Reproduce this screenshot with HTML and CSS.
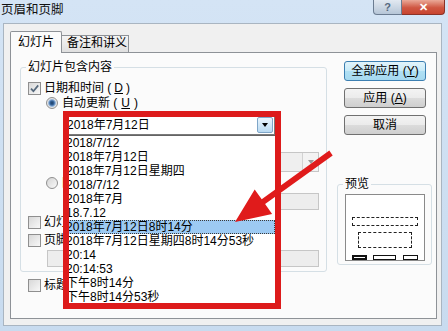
FILE: index.html
```html
<!DOCTYPE html>
<html>
<head>
    <meta charset="utf-8">
    <title>页眉和页脚</title>
    <link rel="stylesheet" href="styles.css">
</head>
<body>
    <div class="window">
        <div class="titlebar">
            <span class="title">页眉和页脚</span>
            <div class="caption-btns">
                <span class="cap help">?</span>
                <span class="cap close">✕</span>
            </div>
        </div>

        <div class="client">
            <div class="tabs">
                <div class="tab active">幻灯片</div>
                <div class="tab">备注和讲义</div>
            </div>

            <div class="panel">
                <div class="panel-row">
                    <!-- 幻灯片包含内容 -->
                    <fieldset class="group content">
                        <legend>幻灯片包含内容</legend>
                        <div class="opt lv0 opt-date">
                            <span class="check"><svg viewBox="0 0 11 11"><path d="M2 5.6 L4.4 8.2 L9.2 2.4" fill="none" stroke="#55687c" stroke-width="1.7"/></svg></span>
                            日期和时间 (<u>D</u>)
                        </div>
                        <div class="opt lv1 opt-auto">
                            <span class="radio on"></span>自动更新 (<u>U</u>)
                        </div>
                        <div class="combo date-combo">
                            <span class="value">2018年7月12日</span>
                            <span class="drop"></span>
                        </div>
                        <div class="combo-row">
                            <div class="combo off lang"><span class="drop"></span></div>
                            <div class="combo off cal"><span class="drop"></span></div>
                        </div>
                        <div class="opt lv1 opt-fixed">
                            <span class="radio"></span>固定
                        </div>
                        <div class="field field-fixed"></div>
                        <div class="opt lv0 opt-num">
                            <span class="check"></span>幻灯片编号
                        </div>
                        <div class="opt lv0 opt-footer">
                            <span class="check"></span>页脚
                        </div>
                        <div class="field field-footer"></div>
                    </fieldset>

                    <div class="side">
                        <button class="btn default">全部应用 (<u>Y</u>)</button>
                        <button class="btn">应用 (<u>A</u>)</button>
                        <button class="btn">取消</button>

                        <fieldset class="group preview">
                            <legend>预览</legend>
                            <div class="preview-box">
                                <div class="ph-title"></div>
                                <div class="ph-body"></div>
                                <div class="ph-foot">
                                    <span class="ph-date"></span>
                                    <span class="ph-text"></span>
                                    <span class="ph-num"></span>
                                </div>
                            </div>
                        </fieldset>
                    </div>
                </div>

                <div class="opt title-opt">
                    <span class="check"></span>标题幻灯片中不显示
                </div>
            </div>
        </div>

        <!-- 展开的日期格式下拉列表 -->
        <ul class="droplist">
            <li>2018/7/12</li>
            <li>2018年7月12日</li>
            <li>2018年7月12日星期四</li>
            <li>2018/7/12</li>
            <li>2018年7月</li>
            <li>18.7.12</li>
            <li class="sel">2018年7月12日8时14分</li>
            <li>2018年7月12日星期四8时14分53秒</li>
            <li>20:14</li>
            <li>20:14:53</li>
            <li>下午8时14分</li>
            <li>下午8时14分53秒</li>
        </ul>

        <!-- 标注 -->
        <div class="callout"></div>
        <svg class="pointer" viewBox="0 0 448 331">
            <polygon fill="#e01b1b" points="329.3,150.6 261.7,199.3 254.7,189.5 235,222 272.1,213.9 265.1,204.1 332.7,155.4"/>
        </svg>
    </div>
</body>
</html>
```

FILE: styles.css
```css
* {
    box-sizing: border-box;
}
body {
    margin: 0;
    font-family: "Liberation Sans", "Noto Sans CJK SC", sans-serif;
    font-size: 12px;
    color: #000;
    background: #cfe0f1;
}
u {
    text-decoration-thickness: 1px;
}

/* 窗口外框 */
.window {
    position: relative;
    width: 448px;
    height: 331px;
    overflow: hidden;
    background: linear-gradient(#d4e4f5, #c8dbef);
}
.titlebar {
    display: flex;
    height: 23px;
}
.title {
    padding: 3px 0 0 1px;
    font-size: 12.5px;
    line-height: 14px;
    color: #111;
}
.caption-btns {
    display: flex;
    height: 15px;
    margin: 0 3px 0 auto;
}
.cap {
    display: flex;
    align-items: center;
    justify-content: center;
    height: 15px;
    border: 1px solid #6b7c91;
    border-top: none;
    font-size: 11px;
    font-weight: bold;
}
.help {
    width: 29px;
    border-radius: 0 0 0 4px;
    background: linear-gradient(#e2e9f1, #b6c6d7);
    color: #56697f;
}
.close {
    width: 43px;
    border-left: none;
    border-color: #8a3227;
    border-radius: 0 0 4px 0;
    background: linear-gradient(#eaa998, #cf5742 55%, #c8442f);
    color: #fff;
}

.client {
    height: 303px;
    margin: 0 6px 0 3px;
    border: 1px solid #a9b5c1;
    background: #f0f0f0;
}

/* 选项卡 */
.tabs {
    display: flex;
    align-items: flex-end;
    height: 28px;
    padding: 7px 0 0 6px;
}
.tab {
    width: 67px;
    height: 17px;
    padding-left: 5px;
    border: 1px solid #8e9297;
    border-bottom: none;
    border-left: none;
    background: linear-gradient(#f5f5f5, #dfdfdf);
    line-height: 15px;
}
.tab.active {
    position: relative;
    z-index: 1;
    width: 52px;
    height: 22px;
    margin-bottom: -1px;
    padding: 0;
    border-left: 1px solid #8e9297;
    border-radius: 2px 2px 0 0;
    background: #fbfbfb;
    text-align: center;
    line-height: 20px;
}
.panel {
    height: 267px;
    margin: 0 4px 0 6px;
    border: 1px solid #8e9297;
    background: #fbfbfb;
}
.panel-row {
    display: flex;
    align-items: flex-start;
}

/* 分组框 */
.group {
    min-width: 0;
    margin: 0;
    padding: 0 0 4px 5px;
    border: 1px solid #d5dfe5;
    border-radius: 3px;
}
.group legend {
    padding: 0 2px;
    line-height: 14px;
}
.content {
    width: 307px;
    margin: 7px 0 0 9px;
}

.opt {
    display: flex;
    align-items: center;
    gap: 3px;
    height: 14px;
    line-height: 14px;
    white-space: nowrap;
}
.lv0 { margin-left: 2px; }
.lv1 { margin-left: 20px; gap: 4px; }
.opt-date { margin-top: 7px; }
.opt-auto { margin-top: 1px; }
.opt-fixed { margin-top: 4px; }
.opt-num { margin-top: 5px; }
.opt-footer { margin-top: 4px; }
.title-opt {
    margin: 6px 0 0 17px;
}

.check {
    display: flex;
    align-items: center;
    justify-content: center;
    flex: none;
    width: 13px;
    height: 13px;
    border: 1px solid #8f8f8f;
    background: linear-gradient(135deg, #d8d8d8, #f8f8f8);
}
.check svg {
    width: 11px;
    height: 11px;
}
.radio {
    flex: none;
    width: 12px;
    height: 12px;
    border: 1px solid #8f8f8f;
    border-radius: 50%;
    background: linear-gradient(135deg, #d4d4d4, #fafafa);
}
.radio.on {
    background: radial-gradient(circle, #1d3d63 0, #34639a 2px, #8fb2da 3.4px, #e6e6e6 4.4px);
}

/* 组合框与文本框 */
.combo {
    display: flex;
    height: 20px;
    border: 1px solid #7a7a7a;
    background: #fff;
}
.date-combo {
    width: 211px;
    margin: 5px 0 0 38px;
}
.combo .value {
    flex: 1;
    padding-left: 2px;
    line-height: 18px;
}
.drop {
    display: flex;
    align-items: center;
    justify-content: center;
    width: 16px;
    margin: 1px;
    border: 1px solid #7fa6c8;
    border-radius: 2px;
    background: linear-gradient(#eaf5fd, #b9daf2);
}
.drop::after {
    content: "";
    border: 3.5px solid transparent;
    border-top: 4px solid #000;
    border-bottom: none;
}
.combo-row {
    display: flex;
    gap: 6px;
    margin: 17px 0 0 38px;
}
.combo.off {
    justify-content: flex-end;
    border-color: #c6c6c6;
    background: #efefef;
}
.combo.off .drop {
    margin: 0;
    border: none;
    border-left: 1px solid #d2d2d2;
    border-radius: 0;
    background: #f3f3f3;
}
.combo.off .drop::after {
    border-top-color: #9a9a9a;
}
.lang { width: 120px; }
.cal { width: 129px; }
.field {
    height: 17px;
    border: 1px solid #c6c6c6;
    background: #ededed;
}
.field-fixed {
    width: 255px;
    margin: 3px 0 0 38px;
}
.field-footer {
    width: 272px;
    margin: 3px 0 0 21px;
}

/* 右侧按钮 */
.side {
    width: 95px;
    margin: 8px 0 0 10px;
}
.btn {
    display: block;
    width: 82px;
    height: 20px;
    margin: 0 0 7px 7px;
    padding: 0;
    border: 1px solid #707070;
    border-radius: 3px;
    background: linear-gradient(#f3f3f3, #ebebeb 50%, #dcdcdc 50%, #cfcfcf);
    font: inherit;
    line-height: 18px;
    color: #000;
}
.btn.default {
    border-color: #3c7fb1;
    background: linear-gradient(#e2f4fb, #c7eaf8 50%, #b0e0f4 50%, #a6d9f0);
}

/* 预览 */
.preview {
    width: 95px;
    margin-top: 42px;
    padding: 0 5px 3px;
}
.preview-box {
    width: 80px;
    height: 67px;
    margin: 3px auto 0;
    padding: 22px 6px 0;
    border: 1px solid #8a8a8a;
    background: #fff;
}
.ph-title {
    height: 9px;
    border: 1px dashed #222;
}
.ph-body {
    height: 16px;
    margin: 6px 6px 0;
    border: 1px dashed #222;
}
.ph-foot {
    display: flex;
    height: 5px;
    margin-top: 7px;
}
.ph-foot span {
    border: 1px solid #111;
}
.ph-foot .ph-date {
    width: 15px;
    border-width: 2px;
}
.ph-text {
    width: 23px;
    margin-left: 6px;
}
.ph-num {
    width: 15px;
    margin-left: 7px;
}

/* 下拉列表（浮在对话框上方） */
.droplist {
    position: absolute;
    left: 64px;
    top: 135px;
    width: 212px;
    height: 170px;
    margin: 0;
    padding: 0;
    list-style: none;
    border: 1px solid #646464;
    background: #fff;
    overflow: hidden;
}
.droplist li {
    height: 14px;
    padding-left: 1px;
    line-height: 14px;
    white-space: nowrap;
}
.droplist li.sel {
    background: #9dcaf3;
    outline: 1px dotted #3a3a3a;
    outline-offset: -1px;
}

.callout {
    position: absolute;
    left: 63px;
    top: 111px;
    width: 218px;
    height: 198px;
    border: 6px solid #dd1b1b;
}
.pointer {
    position: absolute;
    left: 0;
    top: 0;
    width: 448px;
    height: 331px;
}
```
